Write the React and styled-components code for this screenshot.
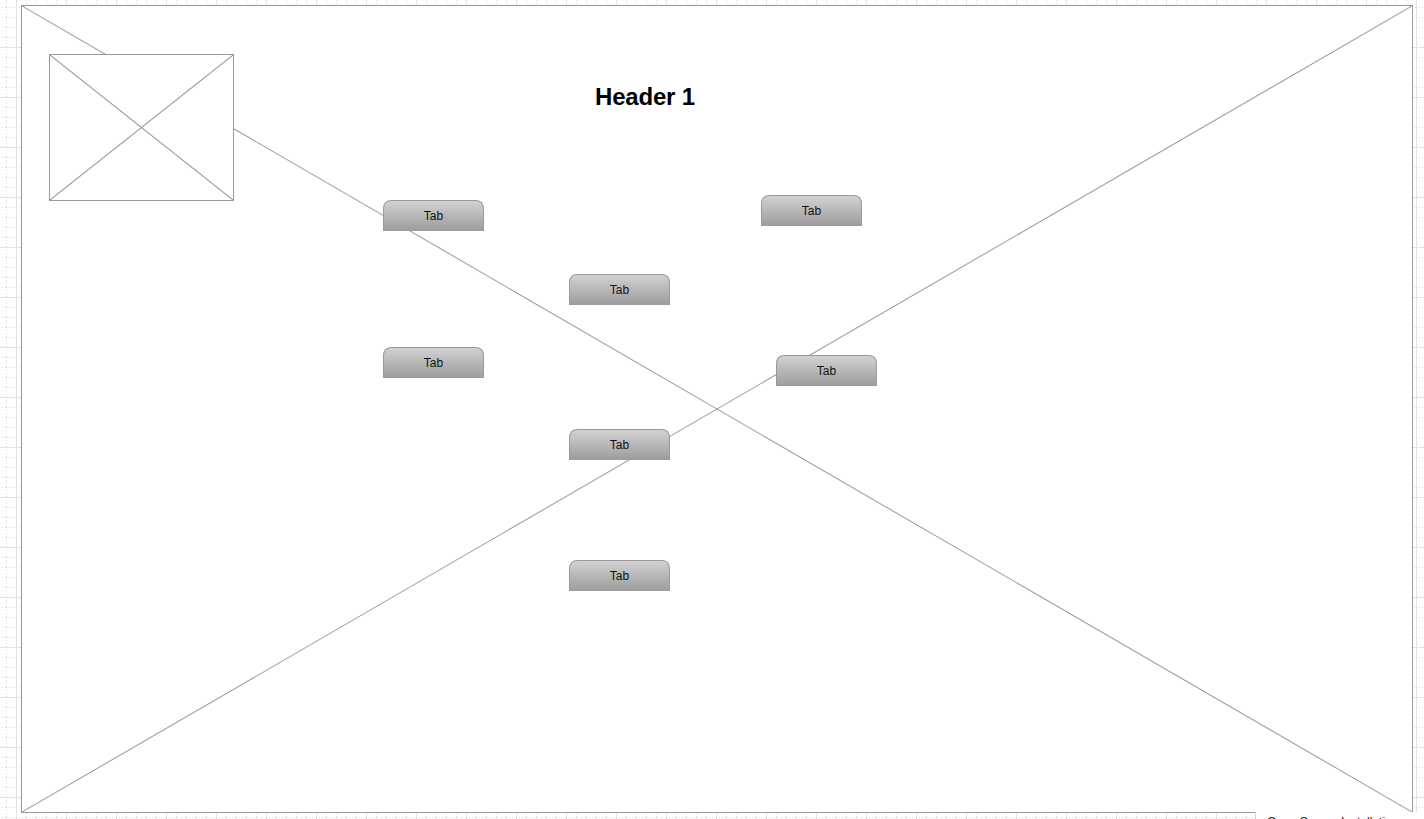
import styled, { createGlobalStyle } from "styled-components";

const GlobalStyle = createGlobalStyle`
  html, body {
    margin: 0;
    padding: 0;
    background: #ffffff;
    font-family: "Liberation Sans", Arial, sans-serif;
  }
`;

const tabs = [
  { x: 361, y: 194 },
  { x: 739, y: 189 },
  { x: 547, y: 268 },
  { x: 361, y: 341 },
  { x: 754, y: 349 },
  { x: 547, y: 423 },
  { x: 547, y: 554 },
];

const GridBackdrop = () => (
  <GridSvg width="1424" height="819">
    <defs>
      <pattern id="minor" width="10" height="10" patternUnits="userSpaceOnUse" x="6" y="7">
        <path d="M0.5 0 V10" stroke="#dadada" strokeWidth="1" strokeDasharray="1 2" />
        <path d="M0 0.5 H10" stroke="#dadada" strokeWidth="1" strokeDasharray="1 2" />
      </pattern>
      <pattern id="major" width="50" height="50" patternUnits="userSpaceOnUse" x="16" y="47">
        <path d="M0.5 0 V50 M0 0.5 H50" stroke="#e2e2e2" strokeWidth="1" />
      </pattern>
    </defs>
    <rect width="1424" height="819" fill="url(#minor)" />
    <rect width="1424" height="819" fill="url(#major)" />
  </GridSvg>
);

const Cross = () => (
  <CrossSvg preserveAspectRatio="none" viewBox="0 0 100 100">
    <line x1="0" y1="0" x2="100" y2="100" vectorEffect="non-scaling-stroke" />
    <line x1="100" y1="0" x2="0" y2="100" vectorEffect="non-scaling-stroke" />
  </CrossSvg>
);

const App = () => {
  return (
    <>
      <GlobalStyle />
      <Page>
        <GridBackdrop />
        <Frame>
          <Cross />
          <Thumb>
            <Cross />
          </Thumb>
          <Header>Header 1</Header>
          {tabs.map((t, i) => (
            <Tab key={i} style={{ left: t.x, top: t.y }}>
              Tab
            </Tab>
          ))}
        </Frame>
        <Note>Open Source Installations</Note>
      </Page>
    </>
  );
};

export default App;

const Page = styled.div`
  position: relative;
  width: 1424px;
  height: 819px;
  overflow: hidden;
  padding: 5px 0 0 21px;
  box-sizing: border-box;
`;

const GridSvg = styled.svg`
  position: absolute;
  left: 0;
  top: 0;
`;

const Frame = styled.div`
  position: relative;
  width: 1392px;
  height: 808px;
  box-sizing: border-box;
  border: 1px solid #9a9a9a;
  background: #ffffff;
`;

const CrossSvg = styled.svg`
  position: absolute;
  inset: 0;
  width: 100%;
  height: 100%;

  line {
    stroke: #9a9a9a;
    stroke-width: 1;
  }
`;

const Thumb = styled.div`
  position: absolute;
  left: 27px;
  top: 48px;
  width: 185px;
  height: 147px;
  box-sizing: border-box;
  border: 1px solid #9a9a9a;
  background: #ffffff;
`;

const Header = styled.h1`
  position: absolute;
  left: 573px;
  top: 79px;
  margin: 0;
  font-size: 24px;
  line-height: 1;
  font-weight: bold;
  letter-spacing: -0.2px;
  color: #000000;
`;

const Tab = styled.div`
  position: absolute;
  width: 101px;
  height: 31px;
  box-sizing: border-box;
  border: 1px solid #9a9a9a;
  border-bottom: none;
  border-radius: 8px 8px 0 0;
  background: linear-gradient(to bottom, #d2d2d2 0%, #b4b4b4 55%, #9c9c9c 100%);
  display: flex;
  align-items: center;
  justify-content: center;
  padding-bottom: 1px;
  font-size: 12px;
  color: #111111;
`;

const Note = styled.div`
  position: absolute;
  left: 1255px;
  top: 812px;
  width: 180px;
  height: 30px;
  box-sizing: border-box;
  border-left: 1px solid #d8d8d8;
  background: #ffffff;
  padding: 3px 0 0 11px;
  font-size: 12px;
  color: #222222;
  white-space: nowrap;
`;
